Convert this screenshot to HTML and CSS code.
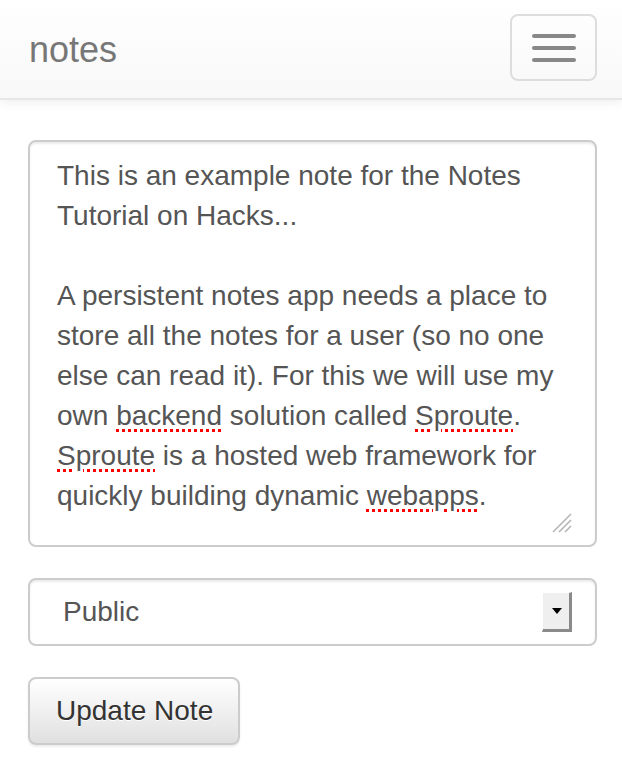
FILE: index.html
```html
<!DOCTYPE html>
<html>
<head>
<meta charset="utf-8">
<link rel="stylesheet" href="styles.css">
</head>
<body>
<nav class="navbar">
  <span class="brand">notes</span>
  <button class="toggle" aria-label="Toggle navigation">
    <span class="bar"></span><span class="bar"></span><span class="bar"></span>
  </button>
</nav>
<main class="content">
  <div class="note-area">
    <div class="note-text">This is an example note for the Notes
Tutorial on Hacks...

A persistent notes app needs a place to
store all the notes for a user (so no one
else can read it). For this we will use my
own <span class="misspelt">backend</span> solution called <span class="misspelt">Sproute</span>.
<span class="misspelt">Sproute</span> is a hosted web framework for
quickly building dynamic <span class="misspelt">webapps</span>.</div>
    <svg class="grip" width="22" height="22" viewBox="0 0 22 22">
      <line x1="21" y1="3" x2="3" y2="21" stroke="#b5b5b5" stroke-width="1.6"/>
      <line x1="21" y1="9" x2="9" y2="21" stroke="#b5b5b5" stroke-width="1.6"/>
      <line x1="21" y1="15" x2="15" y2="21" stroke="#b5b5b5" stroke-width="1.6"/>
    </svg>
  </div>
  <div class="select">
    <span class="select-value">Public</span>
    <span class="select-arrow"><span class="tri"></span></span>
  </div>
  <div class="actions">
    <button class="btn">Update Note</button>
  </div>
</main>
</body>
</html>
```

FILE: styles.css
```css
html, body {
  margin: 0;
  padding: 0;
  background: #fff;
}
body {
  font-family: "Liberation Sans", Arial, sans-serif;
  width: 622px;
  height: 760px;
  overflow: hidden;
}
.navbar {
  height: 98px;
  border-bottom: 2px solid #e7e7e7;
  background: linear-gradient(to bottom, #ffffff 0%, #f8f8f8 100%);
  box-shadow: 0 2px 10px rgba(0,0,0,0.075);
  display: flex;
  align-items: flex-start;
  justify-content: space-between;
  padding: 0 25px 0 29px;
}
.brand {
  font-size: 36px;
  line-height: 40px;
  padding-top: 30px;
  color: #777;
}
.toggle {
  margin-top: 14px;
  width: 87px;
  height: 67px;
  box-sizing: border-box;
  border: 2px solid #dddddd;
  border-radius: 8px;
  background: transparent;
  display: flex;
  flex-direction: column;
  align-items: center;
  justify-content: center;
  gap: 8px;
  padding: 0;
}
.bar {
  display: block;
  width: 44px;
  height: 4px;
  border-radius: 2px;
  background: #888;
}
.content {
  padding: 40px 25px 0 28px;
}
.note-area {
  position: relative;
  height: 407px;
  box-sizing: border-box;
  border: 2px solid #cccccc;
  border-radius: 8px;
  box-shadow: inset 0 2px 2px rgba(0,0,0,0.075);
  padding: 14px 24px 12px 27px;
  overflow: hidden;
}
.note-text {
  white-space: pre;
  font-size: 28px;
  line-height: 40px;
  color: #555;
}
.misspelt {
  text-decoration: underline dotted #ff0000;
  text-decoration-thickness: 3px;
  text-underline-offset: 4px;
}
.grip {
  position: absolute;
  right: 23px;
  bottom: 12px;
}
.select {
  margin-top: 31px;
  height: 68px;
  box-sizing: border-box;
  border: 2px solid #cccccc;
  border-radius: 8px;
  box-shadow: inset 0 2px 2px rgba(0,0,0,0.075);
  display: flex;
  align-items: center;
  justify-content: space-between;
  padding: 0 23px 0 33px;
}
.select-value {
  font-size: 28px;
  line-height: 40px;
  color: #555;
}
.select-arrow {
  width: 30px;
  height: 40px;
  box-sizing: border-box;
  background: #efefef;
  border-right: 3px solid #8a8a8a;
  border-bottom: 3px solid #8a8a8a;
  border-top: 1px solid #ffffff;
  border-left: 1px solid #ffffff;
  display: flex;
  align-items: center;
  justify-content: center;
}
.tri {
  width: 0;
  height: 0;
  border-left: 5px solid transparent;
  border-right: 5px solid transparent;
  border-top: 6px solid #000;
  margin-left: 2px;
}
.actions {
  margin-top: 31px;
}
.btn {
  font-family: "Liberation Sans", Arial, sans-serif;
  font-size: 28px;
  line-height: 40px;
  color: #333;
  padding: 12px 25px 12px 26px;
  border: 2px solid #cccccc;
  border-radius: 8px;
  background: linear-gradient(to bottom, #ffffff 0%, #e0e0e0 100%);
  text-shadow: 0 1px 0 #fff;
  box-shadow: inset 0 1px 0 rgba(255,255,255,0.15), 0 2px 2px rgba(0,0,0,0.075);
}
```
